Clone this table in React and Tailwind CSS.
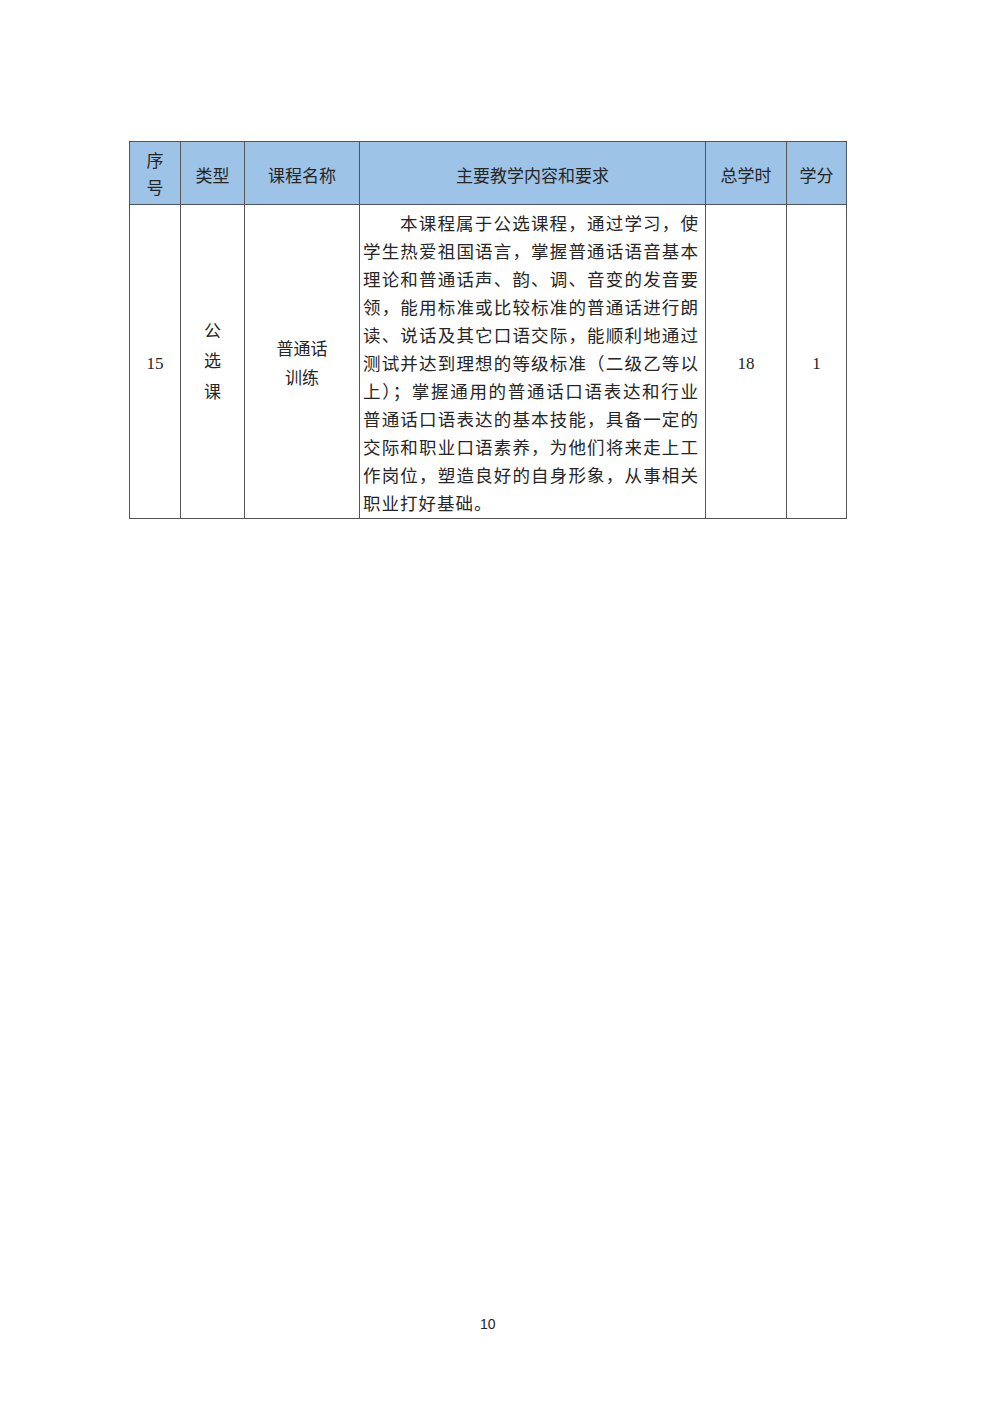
export default function App() {
  const cjk = { fontFamily: '"Liberation Serif", "Noto Sans CJK SC", serif' };
  const body =
    "本课程属于公选课程，通过学习，使学生热爱祖国语言，掌握普通话语音基本理论和普通话声、韵、调、音变的发音要领，能用标准或比较标准的普通话进行朗读、说话及其它口语交际，能顺利地通过测试并达到理想的等级标准（二级乙等以上）；掌握通用的普通话口语表达和行业普通话口语表达的基本技能，具备一定的交际和职业口语素养，为他们将来走上工作岗位，塑造良好的自身形象，从事相关职业打好基础。";
  return (
    <div className="w-[1000px] h-[1414px] bg-white relative" style={cjk}>
      <div className="pt-[141px] pl-[129px]">
        <table className="table-fixed border-collapse w-[717px] text-[#262626] text-[17px]">
          <colgroup>
            <col className="w-[51px]" />
            <col className="w-[64px]" />
            <col className="w-[115px]" />
            <col className="w-[346px]" />
            <col className="w-[81px]" />
            <col className="w-[60px]" />
          </colgroup>
          <thead>
            <tr className="h-[63px] bg-[#9dc3e6]">
              <th className="border border-[#555] font-normal text-center leading-[27px] pt-[4px] pb-0 px-0">序<br />号</th>
              <th className="border border-[#555] font-normal text-center leading-[27px] pt-[6px] pb-0 px-0">类型</th>
              <th className="border border-[#555] font-normal text-center leading-[27px] pt-[6px] pb-0 px-0">课程名称</th>
              <th className="border border-[#555] font-normal text-center leading-[27px] pt-[6px] pb-0 px-0">主要教学内容和要求</th>
              <th className="border border-[#555] font-normal text-center leading-[27px] pt-[6px] pb-0 px-0">总学时</th>
              <th className="border border-[#555] font-normal text-center leading-[27px] pt-[6px] pb-0 px-0">学分</th>
            </tr>
          </thead>
          <tbody>
            <tr className="h-[314px]">
              <td className="border border-[#555] text-center align-middle pt-[4px] pb-0 px-0">15</td>
              <td className="border border-[#555] text-center align-middle pt-[2px] pb-0 px-0 leading-[30.5px]">公<br />选<br />课</td>
              <td className="border border-[#555] text-center align-middle pt-[4px] pb-0 px-0 leading-[29px]">普通话<br />训练</td>
              <td className="border border-[#555] align-top pt-[5px] pb-0 pl-[3px] pr-[6px]">
                <p className="text-[17.5px] tracking-[1px] leading-[28px] indent-[37px] text-justify break-all">{body}</p>
              </td>
              <td className="border border-[#555] text-center align-middle pt-[4px] pb-0 px-0">18</td>
              <td className="border border-[#555] text-center align-middle pt-[4px] pb-0 px-0">1</td>
            </tr>
          </tbody>
        </table>
      </div>
      <div
        className="absolute top-[1314px] left-[480px] text-[14px] text-[#222]"
        style={{ fontFamily: '"Liberation Sans", sans-serif' }}
      >
        10
      </div>
    </div>
  );
}
